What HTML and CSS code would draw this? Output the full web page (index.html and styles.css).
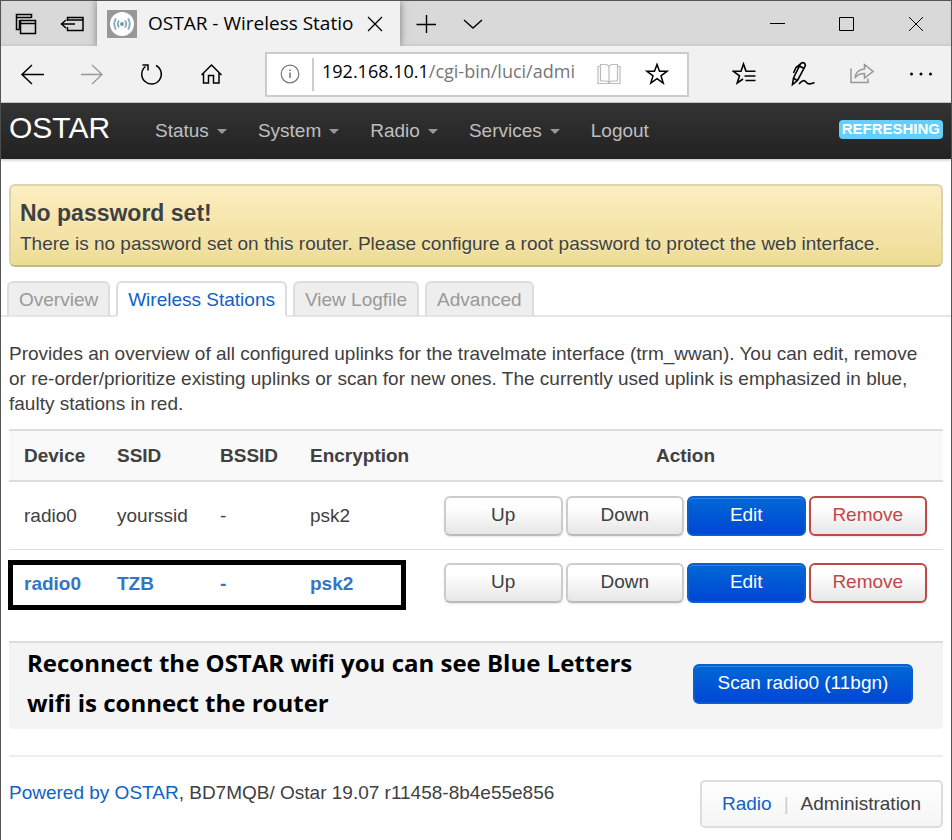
FILE: index.html
```html
<!DOCTYPE html>
<html lang="en">
	<head>
		<meta charset="utf-8">
		<title>OSTAR - Wireless Stations</title>
		<meta name="viewport" content="width=device-width,initial-scale=1.0">
		<link rel="stylesheet" href="styles.css">
	</head>
	<body>
	<div class="window">
		<!-- Browser -->
		<div class="titlebar">
			<div class="tab-tools">
				<button class="icon-btn" aria-label="Tabs you've set aside">
					<svg width="24" height="24" viewBox="0 0 24 24"><path d="M5.500 17.500H2.500V2.500H17.500V6M2.500 5.500H17.500M6.500 8.500H21.500V21.500H6.500ZM6.500 11.500H21.500M5.500 17V8" stroke-width="1.500"/></svg>
				</button>
				<button class="icon-btn" aria-label="Set these tabs aside">
					<svg width="24" height="24" viewBox="0 0 24 24"><path d="M7.500 9V5.500H23V18.500H7.500V15M7.500 8H23M1.500 12H15M6 8L1.500 12L6 16" stroke-width="1.500"/></svg>
				</button>
			</div>
			<div class="tab">
				<svg class="favicon" width="30" height="28" viewBox="0 0 30 28"><rect width="30" height="28" fill="#989898" stroke="none"/><circle cx="15" cy="14" r="12" fill="#fff" stroke="none"/><circle cx="15" cy="14" r="2" fill="#6f9db3" stroke="none"/><path d="M12 10.500Q9.500 14 12 17.500M18 10.500Q20.500 14 18 17.500M9 8.500Q5.500 14 9 19.500M21 8.500Q24.500 14 21 19.500" stroke="#7fa9bd" stroke-width="1.800"/></svg>
				<span class="tab-title">OSTAR - Wireless Statio</span>
				<button class="icon-btn" aria-label="Close tab">
					<svg width="16" height="16" viewBox="0 0 16 16"><path d="M1 1L15 15M15 1L1 15" stroke-width="1.300"/></svg>
				</button>
			</div>
			<div class="tab-actions">
				<button class="icon-btn" aria-label="New tab">
					<svg width="20" height="20" viewBox="0 0 20 20"><path d="M10.500 1V19M.500 10.500H20" stroke-width="1.400"/></svg>
				</button>
				<button class="icon-btn" aria-label="Tab previews">
					<svg width="20" height="20" viewBox="0 0 20 20"><path d="M1 6L10 14L19 6" stroke-width="1.400"/></svg>
				</button>
			</div>
			<div class="window-actions">
				<button class="icon-btn" aria-label="Minimize">
					<svg width="16" height="16" viewBox="0 0 16 16"><path d="M0 7.500H15"/></svg>
				</button>
				<button class="icon-btn" aria-label="Maximize">
					<svg width="16" height="16" viewBox="0 0 16 16"><path d="M.500 1.500H14.500V14.500H.500Z"/></svg>
				</button>
				<button class="icon-btn" aria-label="Close">
					<svg width="16" height="16" viewBox="0 0 16 16"><path d="M1 1L15 15M15 1L1 15"/></svg>
				</button>
			</div>
		</div>
		<div class="toolbar">
			<div class="history">
				<button class="icon-btn" aria-label="Back">
					<svg width="24" height="24" viewBox="0 0 24 24"><path d="M24 12.500H2M12 3L2 12.500L12 22" stroke-width="1.500"/></svg>
				</button>
				<button class="icon-btn faded" aria-label="Forward">
					<svg width="24" height="24" viewBox="0 0 24 24"><path d="M1 12.500H22M12 3L22 12.500L12 22" stroke-width="1.300"/></svg>
				</button>
				<button class="icon-btn" aria-label="Refresh">
					<svg width="24" height="24" viewBox="0 0 24 24"><path d="M16 3.500A9.800 9.800 0 1 1 5.500 4.500M2.500 3H8V8.500" stroke-width="1.500"/></svg>
				</button>
				<button class="icon-btn" aria-label="Home">
					<svg width="24" height="24" viewBox="0 0 24 24"><path d="M1.500 13L11.500 3L21.500 13M3.500 11V21H8.500V13.500H13.500V21H19V11" stroke-width="1.500"/></svg>
				</button>
			</div>
			<div class="address">
				<svg class="info" width="20" height="20" viewBox="0 0 20 20"><circle cx="10" cy="10" r="8.800" stroke-width="1.200"/><path d="M10 8.500V14M10 5.500V7" stroke-width="1.500"/></svg>
				<div class="url"><span class="host">192.168.10.1</span>/cgi-bin/luci/admi</div>
				<button class="icon-btn reading" aria-label="Reading view">
					<svg width="24" height="24" viewBox="0 0 24 24"><path d="M3.500 4.500H1V21.500H23V4.500H20.500M12 4.500Q11 2.500 8.500 2.500H3.500V19H9Q11.500 19 12 21Q12.500 19 15 19H20.500V2.500H15.500Q13 2.500 12 4.500V21" stroke-width="1.200"/></svg>
				</button>
				<button class="icon-btn" aria-label="Add to favorites">
					<svg width="24" height="24" viewBox="0 0 24 24"><path d="M12 2.500L14.500 9.300H22L16 13.800L18.200 21L12 16.600L5.800 21L8 13.800L2 9.300H9.500Z" stroke-width="1.500"/></svg>
				</button>
			</div>
			<div class="hub">
				<button class="icon-btn" aria-label="Favorites">
					<svg width="24" height="24" viewBox="0 0 24 24"><path d="M23.500 9.300H14L11.500 2L9 9.300H1.500L7.500 13.800L5.200 21L11 17M12.500 14H23.500M13.500 18.500H23.500" stroke-width="1.600"/></svg>
				</button>
				<button class="icon-btn" aria-label="Add notes">
					<svg width="24" height="26" viewBox="0 0 24 26"><path d="M1.500 23.500L2.500 17L9.500 3Q11 .800 13 2T14 5.500L6.500 19.500ZM9.500 3L5 6.500L2.500 12M8.500 5L13 7.500M2.500 17L6 19.500M8 23Q12.500 17.500 15 21T23.500 21.500" stroke-width="1.600"/></svg>
				</button>
				<button class="icon-btn faded" aria-label="Share">
					<svg width="24" height="24" viewBox="0 0 24 24"><path d="M1 6.500V20.500H18V16.500M5 16Q6 7.500 14.500 7V2.500L23 9.500L14.500 16V11.500Q8 11.500 5 16Z" stroke-width="1.500"/></svg>
				</button>
				<button class="icon-btn" aria-label="Settings and more">
					<svg width="24" height="24" viewBox="0 0 24 24"><g fill="#000" stroke="none"><circle cx="2.500" cy="12" r="1.500"/><circle cx="12" cy="12" r="1.500"/><circle cx="21.500" cy="12" r="1.500"/></g></svg>
				</button>
			</div>
		</div>
		<!-- Header -->
		<header class="header">
			<a class="brand" href="#">OSTAR</a>
			<nav class="nav">
				<a class="menu" href="#">Status</a>
				<a class="menu" href="#">System</a>
				<a class="menu" href="#">Radio</a>
				<a class="menu" href="#">Services</a>
				<a href="#">Logout</a>
			</nav>
			<span class="label">REFRESHING</span>
		</header>
		<!-- Main -->
		<div class="alert">
			<h4>No password set!</h4>
			<p>There is no password set on this router. Please configure a root password to protect the web interface.</p>
		</div>
		<nav class="tabs">
			<a href="#">Overview</a>
			<a class="active" href="#">Wireless Stations</a>
			<a href="#">View Logfile</a>
			<a href="#">Advanced</a>
		</nav>
		<main class="main">
			<p class="descr">Provides an overview of all configured uplinks for the travelmate interface (trm_wwan). You can edit, remove<br>or re-order/prioritize existing uplinks or scan for new ones. The currently used uplink is emphasized in blue,<br>faulty stations in red.</p>
			<div class="stations-wrap">
				<table class="stations">
					<thead>
						<tr>
							<th class="col-device">Device</th>
							<th class="col-ssid">SSID</th>
							<th class="col-bssid">BSSID</th>
							<th class="col-enc">Encryption</th>
							<th class="col-action">Action</th>
						</tr>
					</thead>
					<tbody>
						<tr>
							<td>radio0</td>
							<td>yourssid</td>
							<td>-</td>
							<td>psk2</td>
							<td>
								<div class="actions">
									<button class="btn">Up</button>
									<button class="btn">Down</button>
									<button class="btn apply">Edit</button>
									<button class="btn remove">Remove</button>
								</div>
							</td>
						</tr>
						<tr class="current">
							<td>radio0</td>
							<td>TZB</td>
							<td>-</td>
							<td>psk2</td>
							<td>
								<div class="actions">
									<button class="btn">Up</button>
									<button class="btn">Down</button>
									<button class="btn apply">Edit</button>
									<button class="btn remove">Remove</button>
								</div>
							</td>
						</tr>
					</tbody>
				</table>
				<div class="marker"></div>
			</div>
			<div class="scan">
				<p class="note">Reconnect the OSTAR wifi you can see Blue Letters<br>wifi is connect the router</p>
				<button class="btn apply">Scan radio0 (11bgn)</button>
			</div>
			<!-- Footer -->
			<footer class="footer">
				<p><a href="#">Powered by OSTAR</a>, BD7MQB/ Ostar 19.07 r11458-8b4e55e856</p>
				<div class="modes">
					<a href="#">Radio</a>
					<span class="divider">|</span>
					<span>Administration</span>
				</div>
			</footer>
		</main>
	</div>
	</body>
</html>
```
FILE: styles.css
```css
* {
	box-sizing: border-box;
}
body {
	margin: 0;
	background: #fff;
	color: #404040;
	font: 19px/25px "Liberation Sans", Arial, sans-serif;
}
p, h4 {
	margin: 0;
}
a {
	color: #0f62c6;
	text-decoration: none;
}
button {
	font: inherit;
	cursor: pointer;
}
svg {
	display: block;
	fill: none;
	stroke: currentColor;
}
.window {
	min-height: 100vh;
	border: 1px solid #555;
	border-bottom: 0;
}

/* browser */
.icon-btn {
	padding: 0;
	border: 0;
	background: none;
	color: #000;
}
.faded {
	color: #999;
}
.titlebar {
	display: flex;
	height: 45px;
	background: #d9d9d9;
	box-shadow: inset 0 -2px 2px #ccc;
	overflow: hidden;
}
.tab-tools {
	display: flex;
	align-items: center;
	gap: 22px;
	width: 96px;
	padding-left: 13px;
}
.tab {
	display: flex;
	align-items: center;
	width: 303px;
	padding: 0 17px 0 10px;
	background: #f1f1f1;
	box-shadow: 0 0 8px #777;
}
.tab-title {
	flex: 1;
	padding-left: 11px;
	color: #000;
	font: 19px/25px "Open Sans", "Noto Sans", sans-serif;
	white-space: nowrap;
}
.tab-actions {
	display: flex;
	align-items: center;
	gap: 27px;
	padding-left: 16px;
}
.window-actions {
	display: flex;
	align-items: center;
	gap: 53px;
	margin-left: auto;
	padding-right: 27px;
}
.toolbar {
	display: flex;
	align-items: center;
	height: 57px;
	background: #f1f1f1;
	border-bottom: 1px solid #ccc;
}
.history {
	display: flex;
	gap: 36px;
	padding: 0 41px 0 19px;
}
.address {
	flex: 1;
	display: flex;
	align-items: center;
	height: 45px;
	padding: 0 18px 0 13px;
	background: #fff;
	border: 2px solid #ccc;
}
.info {
	color: #777;
}
.url {
	flex: 1;
	height: 33px;
	margin-left: 12px;
	padding-left: 8px;
	border-left: 2px solid #ccc;
	color: #767676;
	font: 18px/26px "Open Sans", "Noto Sans", sans-serif;
	white-space: nowrap;
}
.host {
	color: #000;
}
.reading {
	margin-right: 24px;
	color: #bbb;
}
.hub {
	display: flex;
	align-items: center;
	gap: 35px;
	padding: 0 18px 0 43px;
}

/* header */
.header {
	display: flex;
	align-items: center;
	height: 56px;
	padding: 0 8px 2px;
	background: linear-gradient(#333, #222);
	box-shadow: 0 1px 3px rgba(0, 0, 0, .25);
}
.brand {
	width: 146px;
	padding-bottom: 5px;
	color: #fff;
	font-size: 30px;
}
.nav {
	flex: 1;
	display: flex;
	gap: 31px;
}
.nav a {
	color: #bfbfbf;
}
.menu::after {
	content: "";
	display: inline-block;
	margin-left: 8px;
	border: 5px solid transparent;
	border-top-color: #999;
	border-bottom: 0;
	vertical-align: 3px;
}
.label {
	height: 19px;
	margin-bottom: 2px;
	padding: 0 3px;
	background: #62cffc;
	border-radius: 4px;
	color: #fff;
	font-size: 15px;
	font-weight: bold;
	line-height: 17px;
}

/* content */
.alert {
	margin: 25px 8px 14px;
	padding: 14px 9px 4px;
	background: linear-gradient(#fceec1, #eedc94);
	border: 2px solid #dcd2ac;
	border-bottom-color: #bfb78f;
	border-radius: 6px;
	text-shadow: 0 1px 0 rgba(255, 255, 255, .5);
}
.alert h4 {
	font-size: 23px;
	line-height: 27px;
}
.alert p {
	line-height: 34px;
}
.tabs {
	display: flex;
	gap: 6px;
	padding: 0 6px;
	border-bottom: 2px solid #e6e6e6;
}
.tabs a {
	height: 36px;
	margin-bottom: -2px;
	padding: 0 10px;
	background: #eee;
	border: 2px solid #ddd;
	border-bottom-color: #e6e6e6;
	border-radius: 6px 6px 0 0;
	color: #999;
	line-height: 34px;
}
.tabs .active {
	background: #fff;
	border-bottom-color: #fff;
	color: #0f62c6;
}
.main {
	padding: 24px 8px 12px;
}
.stations-wrap {
	position: relative;
	margin-top: 13px;
}
.stations {
	width: 100%;
	border-collapse: separate;
	border-spacing: 0;
	table-layout: fixed;
}
.stations th,
.stations td {
	height: 67px;
	padding: 0 0 0 15px;
	text-align: left;
}
.stations th {
	height: 53px;
	background: #f9f9f9;
	border-top: 2px solid #ddd;
	border-bottom: 2px solid #ddd;
}
.stations td + td,
.stations th + th {
	padding-left: 0;
}
.stations tbody tr + tr td {
	border-top: 1px solid #ddd;
}
.stations .col-device {
	width: 108px;
}
.stations .col-ssid {
	width: 103px;
}
.stations .col-bssid {
	width: 90px;
}
.stations .col-enc {
	width: 118px;
}
.stations .col-action {
	text-align: center;
}
.stations .current {
	color: #3474c4;
	font-weight: bold;
}
.actions {
	display: flex;
	gap: 3px;
	padding: 0 16px;
}
.actions .btn {
	flex: 1;
}
.btn {
	height: 40px;
	padding: 0 20px 2px;
	background: linear-gradient(#fff 25%, #e6e6e6);
	border: 2px solid #ccc;
	border-bottom-color: #bbb;
	border-radius: 6px;
	box-shadow: 0 1px 2px rgba(0, 0, 0, .1);
	color: #404040;
	font-weight: normal;
	line-height: 34px;
}
.btn.apply {
	background: linear-gradient(#0068d6, #0046d5);
	border-color: #0c5fc8;
	box-shadow: inset 0 1px 0 rgba(255, 255, 255, .2);
	color: #fff;
}
.btn.remove {
	background: linear-gradient(#fff 25%, #e6e6e6);
	border-color: #c04848;
	color: #c04848;
}
/* frame round the station in use */
.marker {
	position: absolute;
	left: -1px;
	bottom: 6px;
	width: 398px;
	height: 50px;
	border: 5px solid #000;
}
.scan {
	display: flex;
	align-items: center;
	justify-content: space-between;
	margin-top: 25px;
	padding: 0 30px 6px 18px;
	background: #f4f4f4;
	border-top: 2px solid #ddd;
	border-radius: 0 0 4px 4px;
}
.scan .btn {
	min-width: 220px;
	margin-top: 2px;
}
.note {
	color: #000;
	font: bold 24px/40px "Open Sans", "Noto Sans", sans-serif;
}
.footer {
	display: flex;
	justify-content: space-between;
	margin-top: 26px;
	padding-top: 23px;
	border-top: 2px solid #eee;
}
.modes {
	display: flex;
	gap: 12px;
	height: 48px;
	padding: 0 20px;
	background: linear-gradient(#fff, #f5f5f5);
	border: 2px solid #ddd;
	border-radius: 5px;
	line-height: 44px;
}
.divider {
	color: #ccc;
}
```
